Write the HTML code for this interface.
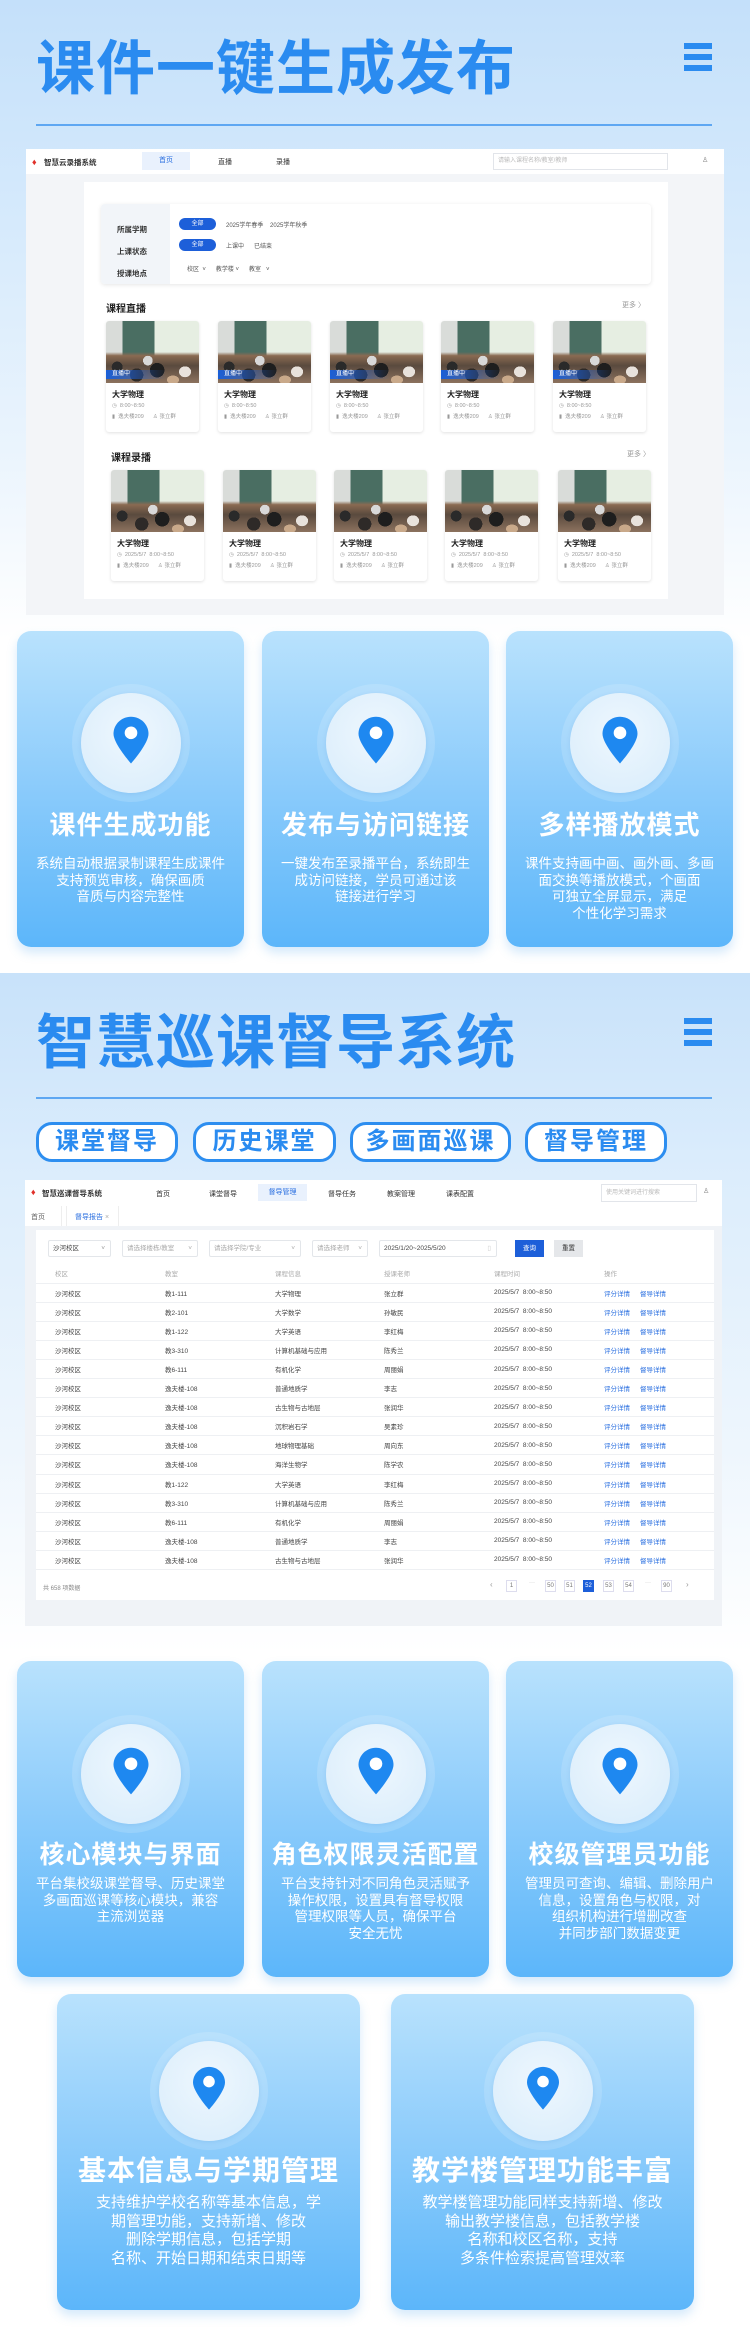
<!DOCTYPE html>
<html><head><meta charset="utf-8">
<style>
*{margin:0;padding:0;box-sizing:border-box}
body{width:750px;height:2342px;position:relative;overflow:hidden;background:#fff;font-family:"Liberation Sans","Noto Sans CJK SC",sans-serif}
.abs{position:absolute}
.sec1bg{left:0;top:0;width:750px;height:640px;background:linear-gradient(180deg,#c4e0fa 0%,#d6eafc 35%,#eaf4fd 70%,#fff 100%)}
.sec2bg{left:0;top:973px;width:750px;height:680px;background:linear-gradient(180deg,#c8e2fa 0%,#dcedfc 30%,#eef6fd 70%,#fff 100%)}
.title{font-size:59px;font-weight:bold;color:#2a8bf0;letter-spacing:1px;line-height:1;white-space:nowrap}
.menu{width:28px}
.menu i{display:block;height:6px;background:#2a8bf0;margin-bottom:5px}
.hline{height:2px;background:#5ea7f2;left:36px;width:676px}
.nav{background:#fff;font-size:7px;color:#333}
.card{position:absolute;width:93px;height:111px;background:#fff;border-radius:3px;box-shadow:0 1px 3px rgba(0,0,0,.12);overflow:hidden}
.img{position:relative;height:62px;background:
linear-gradient(180deg,rgba(0,0,0,0) 50%,#8a6a52 56%,#5a4a3e 72%,#8c725e 100%),
linear-gradient(90deg,#d9dcd9 0%,#d9dcd9 18%,#4a6e62 18%,#4a6e62 52%,#e6eee2 52%,#e6eee2 100%)}
.img:after{content:"";position:absolute;left:0;right:0;bottom:0;height:32px;background:radial-gradient(ellipse 9px 9px at 12% 50%,#2a2a2a 60%,transparent 61%),radial-gradient(ellipse 12px 12px at 55% 60%,#1e1e1e 60%,transparent 61%),radial-gradient(ellipse 11px 11px at 33% 75%,#2e2a28 60%,transparent 61%),radial-gradient(ellipse 10px 9px at 85% 65%,#e8e2dc 60%,transparent 61%),radial-gradient(ellipse 8px 8px at 45% 30%,#d8d8d8 60%,transparent 61%),radial-gradient(ellipse 10px 7px at 72% 90%,#c9a98a 60%,transparent 61%)}
.live{position:absolute;left:0;bottom:4px;width:60px;height:9px;background:linear-gradient(90deg,#1a5fd8,rgba(26,95,216,0));color:#fff;font-size:6px;line-height:9px;padding-left:6px;z-index:2}
.ct{font-size:8px;font-weight:bold;color:#222;margin:6px 0 0 6px}
.cm{font-size:5.5px;color:#999;margin:3px 0 0 6px;white-space:nowrap}
.fc{position:absolute;width:227px;border-radius:14px;background:linear-gradient(180deg,#b9e2fd 0%,#8fcdfb 45%,#5cb6fa 100%);box-shadow:0 6px 10px rgba(90,170,240,.25);color:#fff;text-align:center}
.ring{position:absolute;left:50%;width:118px;height:118px;margin-left:-59px;border-radius:50%;background:rgba(255,255,255,.15)}
.ring .in{position:absolute;left:9px;top:9px;width:100px;height:100px;border-radius:50%;background:radial-gradient(circle at 50% 40%,#eef7fe,#d8ecfb);box-shadow:0 1px 4px rgba(80,150,220,.2)}
.ring svg{position:absolute;left:50%;top:50%;transform:translate(-50%,-56%)}
.fc h3{position:absolute;left:0;right:0;font-size:26px;font-weight:bold;line-height:30px;white-space:nowrap;letter-spacing:1px}
.fc p{position:absolute;left:8px;right:8px;font-size:13.5px;line-height:16.7px}
.tag{position:absolute;top:1122px;height:40px;border:3px solid #2d8ef0;border-radius:16px;background:#fff;color:#2a8bf0;font-size:24px;font-weight:bold;text-align:center;line-height:34px;letter-spacing:2px}
table{border-collapse:collapse;font-size:6.5px;color:#444}
td{height:19.1px;border-bottom:1px solid #eef0f3;white-space:nowrap}
.lk{color:#2a6fe0}
.sel{position:absolute;top:1240px;height:17px;border:1px solid #e3e6ea;border-radius:2px;font-size:6.5px;color:#aaa;line-height:15px;padding-left:4px;background:#fff}
.pg{position:absolute;top:1580px;width:11px;height:12px;border:1px solid #dde;font-size:6px;text-align:center;line-height:10px;color:#777;background:#fff}
</style></head><body>

<div class="abs sec1bg"></div>
<div class="abs title" style="left:36px;top:40px">课件一键生成发布</div>
<div class="abs menu" style="left:684px;top:43px"><i></i><i></i><i></i></div>
<div class="abs hline" style="top:124px"></div>

<div class="abs" style="left:26px;top:149px;width:698px;height:466px;background:#f3f5f8"></div>
<div class="abs nav" style="left:26px;top:149px;width:698px;height:25px">
  <span class="abs" style="left:6px;top:8px;color:#e0302a;font-size:9px">♦</span>
  <span class="abs" style="left:18px;top:8px;font-size:7.5px;font-weight:bold">智慧云录播系统</span>
  <span class="abs" style="left:116px;top:3px;width:48px;height:18px;background:#e9f1fd;color:#2a6fe0;text-align:center;line-height:18px">首页</span>
  <span class="abs" style="left:192px;top:8px">直播</span>
  <span class="abs" style="left:250px;top:8px">录播</span>
  <span class="abs" style="left:467px;top:4px;width:175px;height:17px;border:1px solid #e2e5ea;color:#bbb;font-size:6px;line-height:15px;padding-left:4px">请输入课程名称/教室/教师</span>
  <span class="abs" style="left:676px;top:7px;color:#888">♙</span>
</div>
<div class="abs" style="left:84px;top:182px;width:584px;height:417px;background:#fff"></div>
<div class="abs" style="left:101px;top:204px;width:550px;height:80px;background:#fff;border-radius:4px;box-shadow:0 1px 4px rgba(0,0,0,.1)">
  <div class="abs" style="left:0;top:0;width:69px;height:80px;background:#f2f5f9;border-radius:4px 0 0 4px"></div>
  <div class="abs" style="left:16px;top:15px;font-size:7.5px;color:#333;line-height:22px;font-weight:bold">所属学期<br>上课状态<br>授课地点</div>
  <span class="abs" style="left:78px;top:14px;width:37px;height:12px;background:#1d5fd9;border-radius:6px;color:#fff;font-size:6px;text-align:center;line-height:12px">全部</span>
  <span class="abs" style="left:125px;top:16px;font-size:6px;color:#555">2025学年春季&nbsp;&nbsp;&nbsp;&nbsp;2025学年秋季</span>
  <span class="abs" style="left:78px;top:35px;width:37px;height:12px;background:#1d5fd9;border-radius:6px;color:#fff;font-size:6px;text-align:center;line-height:12px">全部</span>
  <span class="abs" style="left:125px;top:37px;font-size:6px;color:#555">上课中&nbsp;&nbsp;&nbsp;&nbsp;&nbsp;&nbsp;已结束</span>
  <span class="abs" style="left:86px;top:60px;font-size:6px;color:#555">校区&nbsp;&nbsp;˅&nbsp;&nbsp;&nbsp;&nbsp;&nbsp;&nbsp;教学楼 ˅&nbsp;&nbsp;&nbsp;&nbsp;&nbsp;&nbsp;教室&nbsp;&nbsp;&nbsp;˅</span>
</div>
<div class="abs" style="left:106px;top:300px;font-size:10px;font-weight:bold;color:#222">课程直播</div>
<div class="abs" style="left:622px;top:300px;font-size:7px;color:#999">更多 〉</div>
<div class="abs" style="left:111px;top:449px;font-size:10px;font-weight:bold;color:#222">课程录播</div>
<div class="abs" style="left:627px;top:449px;font-size:7px;color:#999">更多 〉</div>

<div class="card" style="left:106px;top:321px"><div class="img"><div class="live">直播中</div></div><div class="ct">大学物理</div><div class="cm">◷&nbsp; 8:00~8:50</div><div class="cm">▮&nbsp; 逸夫楼209&nbsp;&nbsp;&nbsp;&nbsp;&nbsp;&nbsp;♙ 张立群</div></div>
<div class="card" style="left:218px;top:321px"><div class="img"><div class="live">直播中</div></div><div class="ct">大学物理</div><div class="cm">◷&nbsp; 8:00~8:50</div><div class="cm">▮&nbsp; 逸夫楼209&nbsp;&nbsp;&nbsp;&nbsp;&nbsp;&nbsp;♙ 张立群</div></div>
<div class="card" style="left:330px;top:321px"><div class="img"><div class="live">直播中</div></div><div class="ct">大学物理</div><div class="cm">◷&nbsp; 8:00~8:50</div><div class="cm">▮&nbsp; 逸夫楼209&nbsp;&nbsp;&nbsp;&nbsp;&nbsp;&nbsp;♙ 张立群</div></div>
<div class="card" style="left:441px;top:321px"><div class="img"><div class="live">直播中</div></div><div class="ct">大学物理</div><div class="cm">◷&nbsp; 8:00~8:50</div><div class="cm">▮&nbsp; 逸夫楼209&nbsp;&nbsp;&nbsp;&nbsp;&nbsp;&nbsp;♙ 张立群</div></div>
<div class="card" style="left:553px;top:321px"><div class="img"><div class="live">直播中</div></div><div class="ct">大学物理</div><div class="cm">◷&nbsp; 8:00~8:50</div><div class="cm">▮&nbsp; 逸夫楼209&nbsp;&nbsp;&nbsp;&nbsp;&nbsp;&nbsp;♙ 张立群</div></div>

<div class="card" style="left:111px;top:470px"><div class="img"></div><div class="ct">大学物理</div><div class="cm">◷&nbsp; 2025/5/7&nbsp; 8:00~8:50</div><div class="cm">▮&nbsp; 逸夫楼209&nbsp;&nbsp;&nbsp;&nbsp;&nbsp;&nbsp;♙ 张立群</div></div>
<div class="card" style="left:223px;top:470px"><div class="img"></div><div class="ct">大学物理</div><div class="cm">◷&nbsp; 2025/5/7&nbsp; 8:00~8:50</div><div class="cm">▮&nbsp; 逸夫楼209&nbsp;&nbsp;&nbsp;&nbsp;&nbsp;&nbsp;♙ 张立群</div></div>
<div class="card" style="left:334px;top:470px"><div class="img"></div><div class="ct">大学物理</div><div class="cm">◷&nbsp; 2025/5/7&nbsp; 8:00~8:50</div><div class="cm">▮&nbsp; 逸夫楼209&nbsp;&nbsp;&nbsp;&nbsp;&nbsp;&nbsp;♙ 张立群</div></div>
<div class="card" style="left:445px;top:470px"><div class="img"></div><div class="ct">大学物理</div><div class="cm">◷&nbsp; 2025/5/7&nbsp; 8:00~8:50</div><div class="cm">▮&nbsp; 逸夫楼209&nbsp;&nbsp;&nbsp;&nbsp;&nbsp;&nbsp;♙ 张立群</div></div>
<div class="card" style="left:558px;top:470px"><div class="img"></div><div class="ct">大学物理</div><div class="cm">◷&nbsp; 2025/5/7&nbsp; 8:00~8:50</div><div class="cm">▮&nbsp; 逸夫楼209&nbsp;&nbsp;&nbsp;&nbsp;&nbsp;&nbsp;♙ 张立群</div></div>

<div class="fc" style="left:17px;top:631px;height:316px">
  <div class="ring" style="top:53px"><div class="in"></div><svg width="35" height="48" viewBox="0 0 36 48"><path d="M18 0C8 0 0 8 0 17.5 0 28 18 48 18 48S36 28 36 17.5C36 8 28 0 18 0z" fill="#1e88f0"/><circle cx="18" cy="16.5" r="6.5" fill="#fff"/></svg></div>
  <h3 style="top:179px">课件生成功能</h3>
  <p style="top:225px">系统自动根据录制课程生成课件<br>支持预览审核，确保画质<br>音质与内容完整性</p>
</div>
<div class="fc" style="left:262px;top:631px;height:316px">
  <div class="ring" style="top:53px"><div class="in"></div><svg width="35" height="48" viewBox="0 0 36 48"><path d="M18 0C8 0 0 8 0 17.5 0 28 18 48 18 48S36 28 36 17.5C36 8 28 0 18 0z" fill="#1e88f0"/><circle cx="18" cy="16.5" r="6.5" fill="#fff"/></svg></div>
  <h3 style="top:179px">发布与访问链接</h3>
  <p style="top:225px">一键发布至录播平台，系统即生<br>成访问链接，学员可通过该<br>链接进行学习</p>
</div>
<div class="fc" style="left:506px;top:631px;height:316px">
  <div class="ring" style="top:53px"><div class="in"></div><svg width="35" height="48" viewBox="0 0 36 48"><path d="M18 0C8 0 0 8 0 17.5 0 28 18 48 18 48S36 28 36 17.5C36 8 28 0 18 0z" fill="#1e88f0"/><circle cx="18" cy="16.5" r="6.5" fill="#fff"/></svg></div>
  <h3 style="top:179px">多样播放模式</h3>
  <p style="top:225px">课件支持画中画、画外画、多画<br>面交换等播放模式，个画面<br>可独立全屏显示，满足<br>个性化学习需求</p>
</div>

<div class="abs sec2bg"></div>
<div class="abs title" style="left:36px;top:1014px">智慧巡课督导系统</div>
<div class="abs menu" style="left:684px;top:1018px"><i></i><i></i><i></i></div>
<div class="abs hline" style="top:1097px"></div>
<div class="tag" style="left:36px;width:142px">课堂督导</div>
<div class="tag" style="left:193px;width:143px">历史课堂</div>
<div class="tag" style="left:350px;width:161px">多画面巡课</div>
<div class="tag" style="left:525px;width:142px">督导管理</div>

<div class="abs" style="left:25px;top:1180px;width:697px;height:446px;background:#f0f3f7"></div>
<div class="abs nav" style="left:25px;top:1180px;width:697px;height:46px">
  <span class="abs" style="left:6px;top:7px;color:#e0302a;font-size:9px">♦</span>
  <span class="abs" style="left:17px;top:8px;font-size:7.5px;font-weight:bold">智慧巡课督导系统</span>
  <span class="abs" style="left:131px;top:9px">首页</span>
  <span class="abs" style="left:184px;top:9px">课堂督导</span>
  <span class="abs" style="left:233px;top:4px;width:49px;height:17px;background:#e9f1fd;color:#2a6fe0;text-align:center;line-height:17px">督导管理</span>
  <span class="abs" style="left:303px;top:9px">督导任务</span>
  <span class="abs" style="left:362px;top:9px">教案管理</span>
  <span class="abs" style="left:421px;top:9px">课表配置</span>
  <span class="abs" style="left:576px;top:4px;width:96px;height:18px;border:1px solid #e2e5ea;color:#bbb;font-size:6px;line-height:16px;padding-left:4px">使用关键词进行搜索</span>
  <span class="abs" style="left:678px;top:7px;color:#888">♙</span>
  <span class="abs" style="left:0;top:26px;width:37px;height:20px;border-right:1px solid #eee;padding:6px 0 0 6px;color:#666">首页</span>
  <span class="abs" style="left:41px;top:26px;width:53px;height:20px;border-left:1px solid #eee;border-right:1px solid #eee;padding:6px 0 0 8px;color:#2a6fe0">督导报告 <span style="color:#aaa">×</span></span>
</div>
<div class="abs" style="left:36px;top:1230px;width:678px;height:370px;background:#fff"></div>
<div class="sel" style="left:48px;width:63px;color:#444">沙河校区<span style="float:right;margin-right:5px;color:#999">˅</span></div>
<div class="sel" style="left:122px;width:76px">请选择楼栋/教室<span style="float:right;margin-right:5px">˅</span></div>
<div class="sel" style="left:209px;width:92px">请选择学院/专业<span style="float:right;margin-right:5px">˅</span></div>
<div class="sel" style="left:312px;width:56px">请选择老师<span style="float:right;margin-right:5px">˅</span></div>
<div class="sel" style="left:379px;width:118px;color:#444">2025/1/20~2025/5/20<span style="float:right;margin-right:5px;color:#ccc">▯</span></div>
<div class="abs" style="left:515px;top:1240px;width:29px;height:17px;background:#1d5fd9;color:#fff;font-size:6.5px;text-align:center;line-height:17px">查询</div>
<div class="abs" style="left:554px;top:1240px;width:29px;height:17px;background:#e5e7ea;color:#333;font-size:6.5px;text-align:center;line-height:17px">重置</div>
<table class="abs" style="left:36px;top:1264px;width:678px">
<colgroup><col style="width:19px"><col style="width:110px"><col style="width:110px"><col style="width:109px"><col style="width:110px"><col style="width:110px"><col style="width:36px"><col></colgroup>
<tr style="color:#aaa"><td></td><td>校区</td><td>教室</td><td>课程信息</td><td>授课老师</td><td>课程时间</td><td>操作</td><td></td></tr>
<tr><td></td><td>沙河校区</td><td>教1-111</td><td>大学物理</td><td>张立群</td><td>2025/5/7&nbsp; 8:00~8:50</td><td class="lk">评分详情</td><td class="lk">督导详情</td></tr>
<tr><td></td><td>沙河校区</td><td>教2-101</td><td>大学数学</td><td>孙敏民</td><td>2025/5/7&nbsp; 8:00~8:50</td><td class="lk">评分详情</td><td class="lk">督导详情</td></tr>
<tr><td></td><td>沙河校区</td><td>教1-122</td><td>大学英语</td><td>李红梅</td><td>2025/5/7&nbsp; 8:00~8:50</td><td class="lk">评分详情</td><td class="lk">督导详情</td></tr>
<tr><td></td><td>沙河校区</td><td>教3-310</td><td>计算机基础与应用</td><td>陈秀兰</td><td>2025/5/7&nbsp; 8:00~8:50</td><td class="lk">评分详情</td><td class="lk">督导详情</td></tr>
<tr><td></td><td>沙河校区</td><td>教6-111</td><td>有机化学</td><td>周丽娟</td><td>2025/5/7&nbsp; 8:00~8:50</td><td class="lk">评分详情</td><td class="lk">督导详情</td></tr>
<tr><td></td><td>沙河校区</td><td>逸夫楼-108</td><td>普通地质学</td><td>李志</td><td>2025/5/7&nbsp; 8:00~8:50</td><td class="lk">评分详情</td><td class="lk">督导详情</td></tr>
<tr><td></td><td>沙河校区</td><td>逸夫楼-108</td><td>古生物与古地层</td><td>张润华</td><td>2025/5/7&nbsp; 8:00~8:50</td><td class="lk">评分详情</td><td class="lk">督导详情</td></tr>
<tr><td></td><td>沙河校区</td><td>逸夫楼-108</td><td>沉积岩石学</td><td>吴素珍</td><td>2025/5/7&nbsp; 8:00~8:50</td><td class="lk">评分详情</td><td class="lk">督导详情</td></tr>
<tr><td></td><td>沙河校区</td><td>逸夫楼-108</td><td>地球物理基础</td><td>周向东</td><td>2025/5/7&nbsp; 8:00~8:50</td><td class="lk">评分详情</td><td class="lk">督导详情</td></tr>
<tr><td></td><td>沙河校区</td><td>逸夫楼-108</td><td>海洋生物学</td><td>陈学农</td><td>2025/5/7&nbsp; 8:00~8:50</td><td class="lk">评分详情</td><td class="lk">督导详情</td></tr>
<tr><td></td><td>沙河校区</td><td>教1-122</td><td>大学英语</td><td>李红梅</td><td>2025/5/7&nbsp; 8:00~8:50</td><td class="lk">评分详情</td><td class="lk">督导详情</td></tr>
<tr><td></td><td>沙河校区</td><td>教3-310</td><td>计算机基础与应用</td><td>陈秀兰</td><td>2025/5/7&nbsp; 8:00~8:50</td><td class="lk">评分详情</td><td class="lk">督导详情</td></tr>
<tr><td></td><td>沙河校区</td><td>教6-111</td><td>有机化学</td><td>周丽娟</td><td>2025/5/7&nbsp; 8:00~8:50</td><td class="lk">评分详情</td><td class="lk">督导详情</td></tr>
<tr><td></td><td>沙河校区</td><td>逸夫楼-108</td><td>普通地质学</td><td>李志</td><td>2025/5/7&nbsp; 8:00~8:50</td><td class="lk">评分详情</td><td class="lk">督导详情</td></tr>
<tr><td></td><td>沙河校区</td><td>逸夫楼-108</td><td>古生物与古地层</td><td>张润华</td><td>2025/5/7&nbsp; 8:00~8:50</td><td class="lk">评分详情</td><td class="lk">督导详情</td></tr>
</table>
<div class="abs" style="left:43px;top:1583px;font-size:6px;color:#888">共 658 项数据</div>
<div class="abs" style="left:490px;top:1580px;font-size:8px;color:#999">‹</div>
<div class="pg" style="left:506px">1</div>
<div class="abs" style="left:529px;top:1580px;font-size:6px;color:#bbb">···</div>
<div class="pg" style="left:545px">50</div>
<div class="pg" style="left:564px">51</div>
<div class="pg" style="left:583px;background:#1d5fd9;color:#fff;border-color:#1d5fd9">52</div>
<div class="pg" style="left:603px">53</div>
<div class="pg" style="left:623px">54</div>
<div class="abs" style="left:645px;top:1580px;font-size:6px;color:#bbb">···</div>
<div class="pg" style="left:661px">90</div>
<div class="abs" style="left:686px;top:1580px;font-size:8px;color:#999">›</div>

<div class="fc" style="left:17px;top:1661px;height:316px">
  <div class="ring" style="top:54px"><div class="in"></div><svg width="35" height="49" viewBox="0 0 36 48"><path d="M18 0C8 0 0 8 0 17.5 0 28 18 48 18 48S36 28 36 17.5C36 8 28 0 18 0z" fill="#1e88f0"/><circle cx="18" cy="16.5" r="6.5" fill="#fff"/></svg></div>
  <h3 style="top:179px;font-size:25px">核心模块与界面</h3>
  <p style="top:215px">平台集校级课堂督导、历史课堂<br>多画面巡课等核心模块，兼容<br>主流浏览器</p>
</div>
<div class="fc" style="left:262px;top:1661px;height:316px">
  <div class="ring" style="top:54px"><div class="in"></div><svg width="35" height="49" viewBox="0 0 36 48"><path d="M18 0C8 0 0 8 0 17.5 0 28 18 48 18 48S36 28 36 17.5C36 8 28 0 18 0z" fill="#1e88f0"/><circle cx="18" cy="16.5" r="6.5" fill="#fff"/></svg></div>
  <h3 style="top:179px;font-size:25px">角色权限灵活配置</h3>
  <p style="top:215px">平台支持针对不同角色灵活赋予<br>操作权限，设置具有督导权限<br>管理权限等人员，确保平台<br>安全无忧</p>
</div>
<div class="fc" style="left:506px;top:1661px;height:316px">
  <div class="ring" style="top:54px"><div class="in"></div><svg width="35" height="49" viewBox="0 0 36 48"><path d="M18 0C8 0 0 8 0 17.5 0 28 18 48 18 48S36 28 36 17.5C36 8 28 0 18 0z" fill="#1e88f0"/><circle cx="18" cy="16.5" r="6.5" fill="#fff"/></svg></div>
  <h3 style="top:179px;font-size:25px">校级管理员功能</h3>
  <p style="top:215px">管理员可查询、编辑、删除用户<br>信息，设置角色与权限，对<br>组织机构进行增删改查<br>并同步部门数据变更</p>
</div>
<div class="fc" style="left:57px;top:1994px;width:303px;height:316px">
  <div class="ring" style="top:38px"><div class="in"></div><svg width="32" height="46" viewBox="0 0 36 48"><path d="M18 0C8 0 0 8 0 17.5 0 28 18 48 18 48S36 28 36 17.5C36 8 28 0 18 0z" fill="#1e88f0"/><circle cx="18" cy="16.5" r="6.5" fill="#fff"/></svg></div>
  <h3 style="top:162px;font-size:28px">基本信息与学期管理</h3>
  <p style="top:200px;font-size:15px;line-height:18.6px">支持维护学校名称等基本信息，学<br>期管理功能，支持新增、修改<br>删除学期信息，包括学期<br>名称、开始日期和结束日期等</p>
</div>
<div class="fc" style="left:391px;top:1994px;width:303px;height:316px">
  <div class="ring" style="top:38px"><div class="in"></div><svg width="32" height="46" viewBox="0 0 36 48"><path d="M18 0C8 0 0 8 0 17.5 0 28 18 48 18 48S36 28 36 17.5C36 8 28 0 18 0z" fill="#1e88f0"/><circle cx="18" cy="16.5" r="6.5" fill="#fff"/></svg></div>
  <h3 style="top:162px;font-size:28px">教学楼管理功能丰富</h3>
  <p style="top:200px;font-size:15px;line-height:18.6px">教学楼管理功能同样支持新增、修改<br>输出教学楼信息，包括教学楼<br>名称和校区名称，支持<br>多条件检索提高管理效率</p>
</div>
</body></html>
